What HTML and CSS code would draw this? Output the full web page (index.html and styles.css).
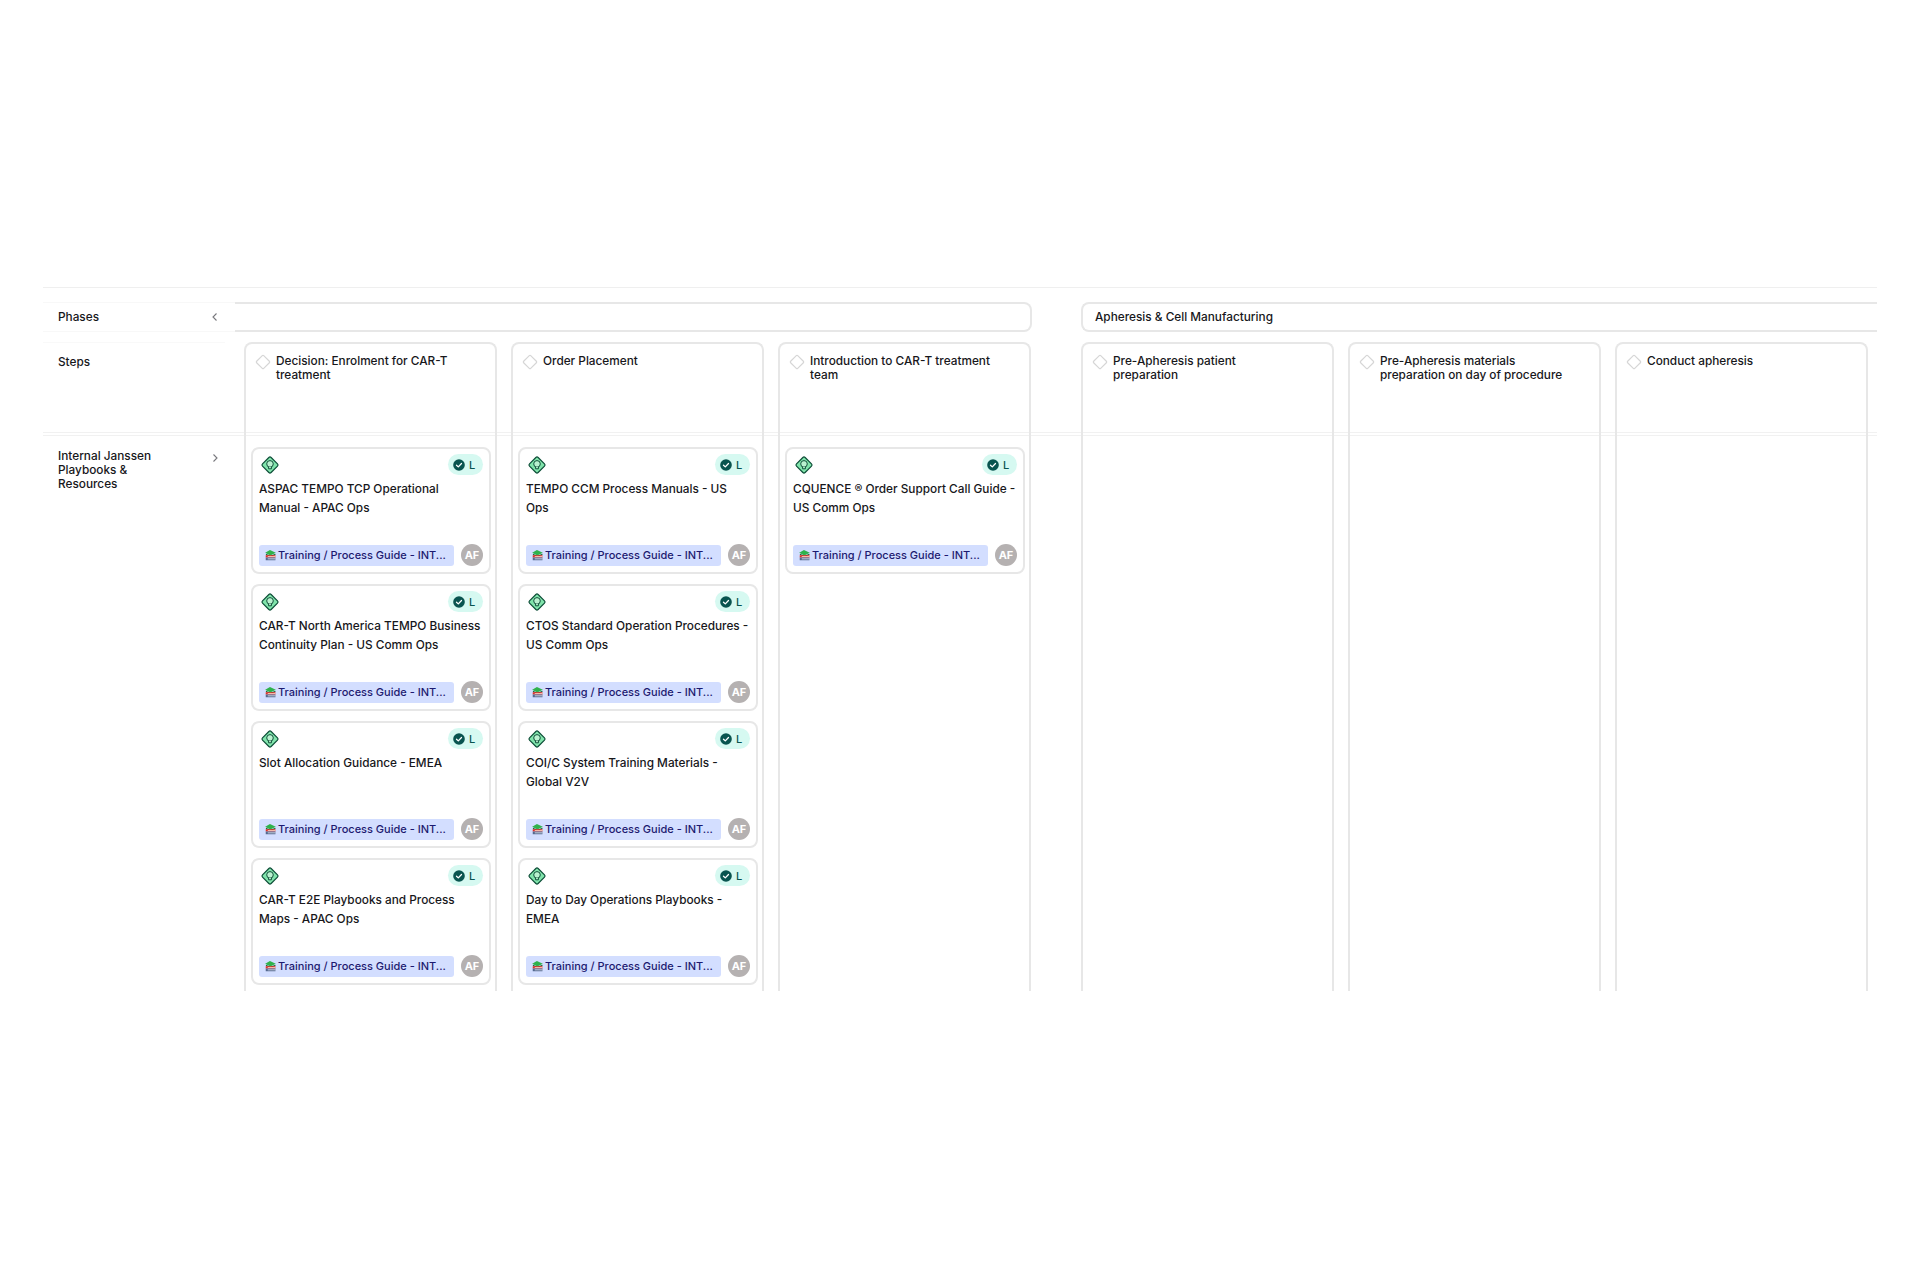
FILE: index.html
```html
<!DOCTYPE html>
<html lang="en">
<head>
<meta charset="utf-8">
<title>Process map</title>
<link rel="stylesheet" href="styles.css">
</head>
<body>
<svg class="defs" width="0" height="0" aria-hidden="true">
  <symbol id="bulb" viewBox="0 0 20 20">
    <rect x="3.9" y="3.9" width="12.2" height="12.2" rx="1.6" transform="rotate(45 10 10)" fill="#80e4ab" stroke="#0f4f39" stroke-width="1.2"/>
    <circle cx="10" cy="8.9" r="3.3" fill="#b9f1cf" stroke="#0f4f39" stroke-width="1"/>
    <path d="M8.6 11.9v1.9h2.8v-1.9" fill="#b9f1cf" stroke="#0f4f39" stroke-width="1"/>
  </symbol>
  <symbol id="check" viewBox="0 0 12 12">
    <circle cx="6" cy="6" r="5.8" fill="#09544f"/>
    <path d="M3.5 6.2l1.8 1.7 3.2-3.4" fill="none" stroke="#fff" stroke-width="1.3" stroke-linecap="round" stroke-linejoin="round"/>
  </symbol>
  <symbol id="books" viewBox="0 0 12 12">
    <path d="M.2 3 5.4 0l6.4 3-6 3z" fill="#2fb24c"/>
    <path d="M1 4l4.8 2.2L11.4 4v1.4L5.8 7 1 5.4z" fill="#17642f"/>
    <path d="M.8 5.6h10.6v2.6H.8z" fill="#e22d26"/>
    <path d="M3 6.5h8.4v.8H3z" fill="#fbe9d4"/>
    <path d="M.8 8.2h10.6v3H.8z" fill="#54688f"/>
    <path d="M3 9.2h8.4v1H3z" fill="#eef1f6"/>
  </symbol>
  <symbol id="step" viewBox="0 0 16 16">
    <rect x="3" y="3" width="10" height="10" rx="1" transform="rotate(45 8 8)" fill="#fff" stroke="#d6d6d6" stroke-width="1.2"/>
  </symbol>
</svg>

<main class="board">
  <div class="phases">
    <div class="phase-label">
      <span>Phases</span>
      <svg class="chev" viewBox="0 0 12 12"><path d="M7.5 2.5 4 6l3.5 3.5"/></svg>
    </div>
    <div class="phase phase-first"></div>
    <div class="phase phase-last">Apheresis &amp; Cell Manufacturing</div>
  </div>

  <div class="grid">
    <div class="divider"></div>
    <div class="labels">
      <div class="steps-label">Steps</div>
      <div class="lane-label">
        <span>Internal Janssen Playbooks &amp; Resources</span>
        <svg class="chev" viewBox="0 0 12 12"><path d="M4.5 2.5 8 6l-3.5 3.5"/></svg>
      </div>
    </div>

    <div class="group group-first">
      <section class="col">
        <header class="step"><svg class="step-icon"><use href="#step"/></svg><span>Decision: Enrolment for CAR-T treatment</span></header>
        <div class="cards">
          <article class="card">
            <div class="card-top"><svg class="bulb"><use href="#bulb"/></svg><span class="pill"><svg class="check"><use href="#check"/></svg>L</span></div>
            <p class="title">ASPAC TEMPO TCP Operational Manual - APAC Ops</p>
            <div class="card-foot"><span class="tag"><svg class="books"><use href="#books"/></svg>Training / Process Guide - INT...</span><span class="avatar">AF</span></div>
          </article>
          <article class="card">
            <div class="card-top"><svg class="bulb"><use href="#bulb"/></svg><span class="pill"><svg class="check"><use href="#check"/></svg>L</span></div>
            <p class="title">CAR-T North America TEMPO Business Continuity Plan - US Comm Ops</p>
            <div class="card-foot"><span class="tag"><svg class="books"><use href="#books"/></svg>Training / Process Guide - INT...</span><span class="avatar">AF</span></div>
          </article>
          <article class="card">
            <div class="card-top"><svg class="bulb"><use href="#bulb"/></svg><span class="pill"><svg class="check"><use href="#check"/></svg>L</span></div>
            <p class="title">Slot Allocation Guidance - EMEA</p>
            <div class="card-foot"><span class="tag"><svg class="books"><use href="#books"/></svg>Training / Process Guide - INT...</span><span class="avatar">AF</span></div>
          </article>
          <article class="card">
            <div class="card-top"><svg class="bulb"><use href="#bulb"/></svg><span class="pill"><svg class="check"><use href="#check"/></svg>L</span></div>
            <p class="title">CAR-T E2E Playbooks and Process Maps - APAC Ops</p>
            <div class="card-foot"><span class="tag"><svg class="books"><use href="#books"/></svg>Training / Process Guide - INT...</span><span class="avatar">AF</span></div>
          </article>
        </div>
      </section>

      <section class="col">
        <header class="step"><svg class="step-icon"><use href="#step"/></svg><span>Order Placement</span></header>
        <div class="cards">
          <article class="card">
            <div class="card-top"><svg class="bulb"><use href="#bulb"/></svg><span class="pill"><svg class="check"><use href="#check"/></svg>L</span></div>
            <p class="title">TEMPO CCM Process Manuals - US Ops</p>
            <div class="card-foot"><span class="tag"><svg class="books"><use href="#books"/></svg>Training / Process Guide - INT...</span><span class="avatar">AF</span></div>
          </article>
          <article class="card">
            <div class="card-top"><svg class="bulb"><use href="#bulb"/></svg><span class="pill"><svg class="check"><use href="#check"/></svg>L</span></div>
            <p class="title">CTOS Standard Operation Procedures - US Comm Ops</p>
            <div class="card-foot"><span class="tag"><svg class="books"><use href="#books"/></svg>Training / Process Guide - INT...</span><span class="avatar">AF</span></div>
          </article>
          <article class="card">
            <div class="card-top"><svg class="bulb"><use href="#bulb"/></svg><span class="pill"><svg class="check"><use href="#check"/></svg>L</span></div>
            <p class="title">COI/C System Training Materials - Global V2V</p>
            <div class="card-foot"><span class="tag"><svg class="books"><use href="#books"/></svg>Training / Process Guide - INT...</span><span class="avatar">AF</span></div>
          </article>
          <article class="card">
            <div class="card-top"><svg class="bulb"><use href="#bulb"/></svg><span class="pill"><svg class="check"><use href="#check"/></svg>L</span></div>
            <p class="title">Day to Day Operations Playbooks - EMEA</p>
            <div class="card-foot"><span class="tag"><svg class="books"><use href="#books"/></svg>Training / Process Guide - INT...</span><span class="avatar">AF</span></div>
          </article>
        </div>
      </section>

      <section class="col">
        <header class="step"><svg class="step-icon"><use href="#step"/></svg><span>Introduction to CAR-T treatment team</span></header>
        <div class="cards">
          <article class="card">
            <div class="card-top"><svg class="bulb"><use href="#bulb"/></svg><span class="pill"><svg class="check"><use href="#check"/></svg>L</span></div>
            <p class="title">CQUENCE ® Order Support Call Guide - US Comm Ops</p>
            <div class="card-foot"><span class="tag"><svg class="books"><use href="#books"/></svg>Training / Process Guide - INT...</span><span class="avatar">AF</span></div>
          </article>
        </div>
      </section>
    </div>

    <div class="group group-last">
      <section class="col">
        <header class="step"><svg class="step-icon"><use href="#step"/></svg><span>Pre-Apheresis patient preparation</span></header>
      </section>
      <section class="col">
        <header class="step"><svg class="step-icon"><use href="#step"/></svg><span>Pre-Apheresis materials preparation on day of procedure</span></header>
      </section>
      <section class="col">
        <header class="step"><svg class="step-icon"><use href="#step"/></svg><span>Conduct apheresis</span></header>
      </section>
    </div>
  </div>
</main>
</body>
</html>
```

FILE: styles.css
```css
* { box-sizing: border-box; }

html, body { margin: 0; background: #fff; }

body {
  height: 1280px;
  overflow: hidden;
  font-family: Inter, "Liberation Sans", sans-serif;
  font-size: 11.8px;
  font-weight: 450;
  line-height: 14px;
  color: #17171b;
}

.defs { position: absolute; }

.board {
  width: 1834px;
  margin: 287px 0 0 43px;
  padding-top: 14px;
  border-top: 1px solid #efefef;
  overflow: hidden;
}

.phases { display: flex; height: 30px; }

.phase-label {
  width: 192px;
  flex: none;
  display: flex;
  align-items: center;
  justify-content: space-between;
  padding: 0 14px 0 15px;
  border-top: 1px solid #f8f8f8;
  border-bottom: 1px solid #f8f8f8;
}

.chev { width: 12px; height: 12px; flex: none; }
.chev path { fill: none; stroke: #77777c; stroke-width: 1.1; }

.phase {
  border: 2px solid #e7e7e7;
  display: flex;
  align-items: center;
}
.phase-first {
  width: 797px;
  flex: none;
  border-left: 0;
  border-radius: 0 8px 8px 0;
}
.phase-last {
  flex: 1;
  margin-left: 49px;
  padding-left: 12px;
  border-right: 0;
  border-radius: 8px 0 0 8px;
}

.grid {
  position: relative;
  display: flex;
  height: 649px;
  margin-top: 10px;
  overflow: hidden;
}

.divider {
  position: absolute;
  left: 0;
  right: 0;
  top: 90px;
  height: 4px;
  border-top: 1px solid #f1f1f1;
  border-bottom: 1px solid #f1f1f1;
}

.labels { width: 192px; flex: none; }

.steps-label {
  width: 182px;
  height: 95px;
  padding: 12px 0 0 15px;
  border-top: 1px solid #f9f9f9;
}

.lane-label {
  display: flex;
  justify-content: space-between;
  padding: 12px 14px 0 15px;
}
.lane-label span { width: 110px; }
.lane-label .chev { margin-top: 3px; }

.group { display: flex; gap: 14.5px; position: relative; }
.group-first { width: 797px; flex: none; padding-left: 9px; }
.group-last { margin-left: 49px; }

.col {
  width: 252.5px;
  flex: none;
  height: 660px;
  border: 2px solid #e7e7e7;
  border-bottom: 0;
  border-radius: 8px 8px 0 0;
}

.step {
  display: flex;
  align-items: flex-start;
  gap: 5px;
  height: 89px;
  padding: 10px 0 0 9px;
}
.step span { width: 190px; }
.step-icon { width: 16px; height: 16px; flex: none; }

.cards {
  display: flex;
  flex-direction: column;
  gap: 10px;
  padding: 14px 3.5px 0 5px;
}

.card {
  position: relative;
  display: flex;
  flex-direction: column;
  height: 127px;
  padding: 5px 6px 6px;
  background: #fff;
  border: 2px solid #e7e7e7;
  border-radius: 8px;
}

.card-top {
  display: flex;
  align-items: center;
  justify-content: space-between;
  height: 21px;
}

.bulb { width: 20px; height: 20px; flex: none; margin-left: 1px; }

.pill {
  display: flex;
  align-items: center;
  width: 35px;
  height: 21px;
  padding-left: 4.5px;
  gap: 4.5px;
  background: #d6f9f1;
  border-radius: 11px;
  color: #09544f;
  font-size: 11px;
  font-weight: 500;
}
.check { width: 12px; height: 12px; flex: none; }

.title {
  margin: 4.5px 0 0;
  font-size: 11.8px;
  line-height: 19px;
}

.card-foot {
  margin-top: auto;
  display: flex;
  align-items: center;
  justify-content: space-between;
}

.tag {
  display: flex;
  align-items: center;
  gap: 2px;
  width: 195px;
  height: 21px;
  padding-left: 6px;
  background: #d3deff;
  border-radius: 3px;
  color: #1d1a70;
  font-size: 11px;
  font-weight: 500;
  white-space: nowrap;
  overflow: hidden;
}
.books { width: 11px; height: 11px; flex: none; }

.avatar {
  width: 22px;
  height: 22px;
  flex: none;
  display: flex;
  align-items: center;
  justify-content: center;
  border-radius: 50%;
  background: #b5b1b1;
  color: #fff;
  font-size: 11px;
  font-weight: 700;
}
```
